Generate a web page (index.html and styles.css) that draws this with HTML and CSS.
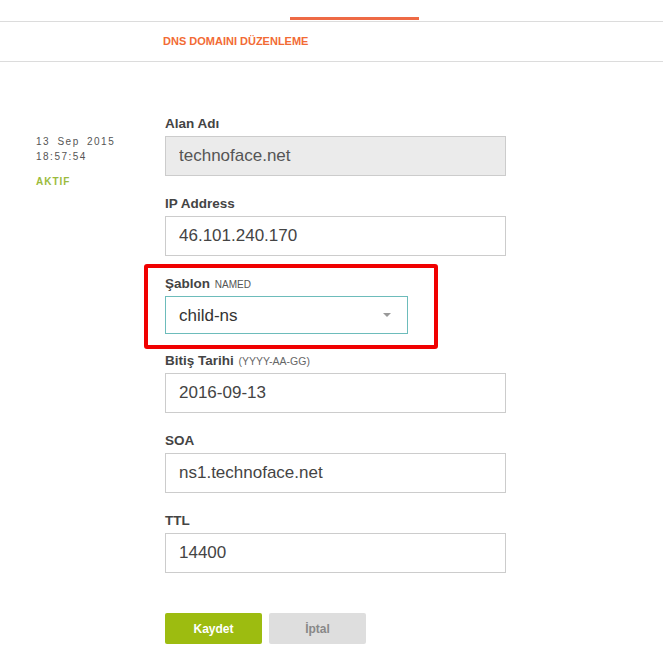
FILE: index.html
```html
<!DOCTYPE html>
<html lang="tr">
<head>
    <meta charset="UTF-8">
    <meta name="viewport" content="width=device-width, initial-scale=1.0">
    <title>DNS Domaini Düzenleme</title>
    <link rel="stylesheet" href="styles.css">
</head>
<body>
    <div class="tabs">
        <span class="tab-active"></span>
    </div>
    <div class="page-title">DNS DOMAINI DÜZENLEME</div>

    <div class="main">
        <div class="meta">
            <div class="meta-date">13 Sep 2015<br>18:57:54</div>
            <div class="meta-status">AKTIF</div>
        </div>

        <form class="form">
            <div class="field">
                <label>Alan Adı</label>
                <input type="text" class="input-field input-disabled" value="technoface.net" readonly>
            </div>
            <div class="field">
                <label>IP Address</label>
                <input type="text" class="input-field" value="46.101.240.170">
            </div>
            <div class="field field-marked">
                <label>Şablon <small>NAMED</small></label>
                <div class="select-wrap">
                    <select class="select-field">
                        <option>child-ns</option>
                    </select>
                </div>
            </div>
            <div class="field">
                <label>Bitiş Tarihi <small class="hint">(YYYY-AA-GG)</small></label>
                <input type="text" class="input-field" value="2016-09-13">
            </div>
            <div class="field">
                <label>SOA</label>
                <input type="text" class="input-field" value="ns1.technoface.net">
            </div>
            <div class="field">
                <label>TTL</label>
                <input type="text" class="input-field" value="14400">
            </div>

            <div class="buttons">
                <button type="submit" class="button">Kaydet</button>
                <button type="button" class="button button-secondary">İptal</button>
            </div>
        </form>
    </div>
</body>
</html>
```

FILE: styles.css
```css
body {
    font-family: 'Liberation Sans', Arial, sans-serif;
    margin: 0;
    background-color: white;
    color: #444;
}

.tabs {
    height: 21px;
    border-bottom: 1px solid #dcdcdc;
    display: flex;
    align-items: flex-end;
}

.tab-active {
    display: block;
    width: 129px;
    height: 3px;
    margin-left: 290px;
    margin-bottom: 1px;
    background-color: #ee6a45;
}

.page-title {
    height: 39px;
    line-height: 39px;
    padding-left: 163px;
    border-bottom: 1px solid #dcdcdc;
    color: #f26b35;
    font-size: 11px;
    font-weight: bold;
}

.main {
    display: flex;
    padding-top: 54px;
}

.meta {
    width: 129px;
    padding-left: 36px;
    padding-top: 18px;
}

.meta-date {
    font-size: 10px;
    line-height: 15px;
    letter-spacing: 1.5px;
    word-spacing: 3px;
    color: #555;
}

.meta-status {
    margin-top: 10px;
    font-size: 10px;
    line-height: 15px;
    font-weight: bold;
    letter-spacing: 1px;
    color: #9bbb3d;
}

.form {
    width: 341px;
}

.field {
    margin-bottom: 20px;
}

.field label {
    display: block;
    height: 16px;
    line-height: 16px;
    margin-bottom: 4px;
    font-size: 13.5px;
    font-weight: bold;
    color: #444;
}

.field label small {
    font-size: 10px;
    font-weight: normal;
    color: #555;
    margin-left: 1px;
}

.field label .hint {
    font-size: 10.5px;
    color: #666;
}

.input-field {
    display: block;
    width: 100%;
    height: 40px;
    box-sizing: border-box;
    border: 1px solid #ccc;
    padding: 0 13px;
    margin: 0;
    font-family: 'Liberation Sans', Arial, sans-serif;
    font-size: 17px;
    color: #444;
    background-color: white;
    outline: none;
}

.input-disabled {
    background-color: #ebebeb;
    color: #555;
}

/* highlighted field, red annotation frame around it */
.field-marked {
    position: relative;
    margin-bottom: 19px;
}

.field-marked::after {
    content: "";
    position: absolute;
    left: -21px;
    top: -12px;
    width: 286px;
    height: 77px;
    border: 4px solid #f00000;
    border-radius: 3px;
    pointer-events: none;
}

.select-wrap {
    position: relative;
    width: 243px;
}

.select-field {
    display: block;
    width: 100%;
    height: 38px;
    box-sizing: border-box;
    border: 1px solid #6dbcbb;
    border-radius: 0;
    padding: 0 13px;
    font-family: 'Liberation Sans', Arial, sans-serif;
    font-size: 17px;
    color: #333;
    background-color: white;
    -webkit-appearance: none;
    appearance: none;
    outline: none;
}

.select-wrap::after {
    content: "";
    position: absolute;
    right: 17px;
    top: 17px;
    border-left: 4px solid transparent;
    border-right: 4px solid transparent;
    border-top: 4px solid #999;
}

.buttons {
    display: flex;
    gap: 7px;
    margin-top: 40px;
}

.button {
    width: 97px;
    height: 31px;
    border: none;
    border-radius: 2px;
    background-color: #9dbc10;
    color: white;
    font-family: 'Liberation Sans', Arial, sans-serif;
    font-size: 12px;
    font-weight: bold;
    cursor: pointer;
}

.button-secondary {
    background-color: #dedede;
    color: #888;
}
```
